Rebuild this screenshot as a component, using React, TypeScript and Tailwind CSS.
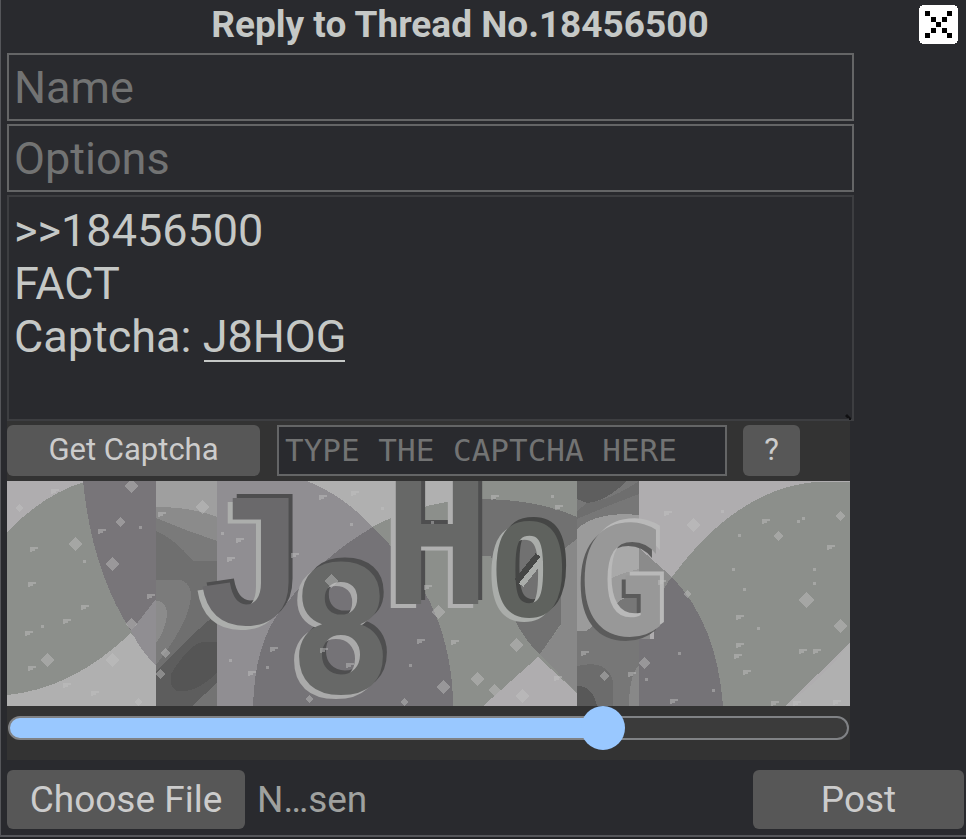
import { useState } from "react";

type Shape = [color: string, d: string];

const backdrop: Shape[] = [
  ["#8c8f8b", "M0 0H149V225H0Z"],
  ["#afadaf", "M0 0H80Q38 12 0 51Z"],
  ["#787579", "M76 0H149V118L124 150Q85 90 76 0Z"],
  ["#b0b0b0", "M0 214Q65 208 124 152L149 184V225H0Z"],
  ["#908e92", "M124 150L149 118V184Q135 172 124 150Z"],
  ["#9f9f9f", "M149 0H210V225H149Z"],
  ["#8b8b8b", "M149 26Q185 26 210 36V225H149Z"],
  ["#7a7a7a", "M149 37Q180 50 210 60V225H149Z"],
  ["#6f6f6f", "M149 50Q168 58 186 80H210V225H149Z"],
  ["#7b7b7b", "M149 99H174Q187 104 183 122Q179 145 149 184Z"],
  ["#8b8b8b", "M149 120Q160 120 160 134Q158 150 149 162Z"],
  ["#5d5d5d", "M149 190L192 148L210 132V225H149Z"],
  ["#555555", "M164 193Q182 163 196 161H210V192Q188 213 170 210Q162 206 164 193Z"],
  ["#737373", "M185 225L210 202V225Z"],
  ["#908e92", "M210 0H390V225H210Z"],
  ["#b0b0b0", "M300 0H470V70H385Q350 20 300 0Z"],
  ["#8c8f8b", "M365 46Q410 22 470 18V0H570V225H246Z"],
  ["#757377", "M246 225Q248 155 280 122Q315 75 366 46Q410 90 427 130Q446 175 446 225Z"],
  ["#717171", "M470 18Q530 18 570 36V120L533 173Q505 150 484 75H470Z"],
  ["#8c8f8b", "M375 41Q420 20 470 18V140L423 120Q400 70 375 41Z"],
  ["#888888", "M533 173L554 144L554 70L570 58V212Z"],
  ["#afadaf", "M531 176L476 225H570V212Z"],
  ["#777777", "M570 0H632V225H570Z"],
  ["#5e5e5e", "M570 0H620Q598 21 580 22L570 18Z"],
  ["#6e6e6e", "M570 30L580 22Q604 19 632 0V13Q600 25 570 38Z"],
  ["#9b9b9b", "M570 48Q590 30 632 34V150H570Z"],
  ["#a9a9a9", "M588 90Q600 58 632 48V88Q598 96 588 110Z"],
  ["#777777", "M594 138Q612 115 632 112V158H570Z"],
  ["#6c6c6c", "M570 185Q600 178 606 200V225H570Z"],
  ["#585858", "M570 205Q585 204 590 225H570Z"],
  ["#888888", "M622 225Q622 195 632 184V225Z"],
  ["#afadaf", "M632 0H843V225H632Z"],
  ["#8b8b8b", "M632 67L665 96Q650 120 642 160H632Z"],
  ["#757377", "M665 96Q649 113 647 158H632V225H716Q710 143 665 96Z"],
  ["#8c8f8b", "M665 96Q730 8 808 1H843V162L778 225H716Q710 143 665 96Z"],
  ["#b0b0b0", "M778 225Q816 198 843 162V225Z"],
];

// x, y and half-size of each speck
const specks: [number, number, number][] = [
  [12, 27, 4], [68, 63, 7], [124, 5, 7], [113, 41, 5], [105, 83, 7], [40, 179, 7],
  [124, 143, 6], [105, 179, 7], [153, 193, 5], [195, 26, 7], [131, 221, 4], [158, 172, 5],
  [324, 100, 7], [431, 131, 7], [509, 164, 7], [470, 198, 7], [436, 206, 7], [487, 209, 6],
  [515, 215, 7], [397, 221, 4], [302, 218, 4], [686, 44, 7], [771, 55, 5], [833, 35, 5],
  [799, 119, 8], [833, 145, 7], [637, 182, 6], [597, 195, 5], [680, 113, 4],
];

const flecks: [number, number][] = [
  [48, 10], [27, 68], [25, 103], [78, 126], [60, 140], [22, 152], [25, 187], [60, 204],
  [88, 212], [95, 50], [144, 115], [155, 33], [233, 59], [224, 78], [288, 74], [316, 16],
  [348, 12], [267, 168], [245, 192], [317, 169], [343, 184], [488, 16], [552, 26],
  [421, 106], [414, 160], [448, 161], [578, 172], [551, 197], [661, 32], [759, 40],
  [824, 66], [733, 136], [733, 164], [731, 175], [740, 191], [796, 170], [810, 170],
  [655, 101], [667, 220], [625, 193], [768, 222], [790, 222], [830, 221],
];

const dots: [number, number][] = [
  [133, 46], [77, 80], [35, 145], [215, 52], [223, 179], [260, 186], [344, 43], [375, 27],
  [545, 15], [425, 41], [403, 184], [715, 30], [732, 54], [791, 40], [796, 37], [726, 88],
  [807, 88], [807, 102], [737, 108], [751, 147], [672, 172], [639, 198], [706, 209],
];

const letters = [
  { char: "J", x: 186, y: 143, style: "font-['Liberation_Mono',monospace] text-[192px] fill-[#6a696b] [text-shadow:-5px_4px_0_#acaeac,4px_-4px_0_#4e4e4f]" },
  { char: "8", x: 281, y: 212, style: "font-['DejaVu_Sans_Mono',monospace] text-[176px] fill-[#676867] [text-shadow:-5px_4px_0_#aaaaaa,4px_-4px_0_#4e4e4f]" },
  { char: "H", x: 377, y: 123, style: "font-['DejaVu_Sans_Mono',monospace] text-[176px] fill-[#676867] [text-shadow:-5px_4px_0_#b0b0b0,4px_-4px_0_#4e4e4f]" },
  { char: "0", x: 484, y: 136, style: "font-['Liberation_Sans',sans-serif] text-[138px] fill-[#5f625e] [text-shadow:-5px_4px_0_#aaadaa,4px_-4px_0_#454645]" },
  { char: "G", x: 569, y: 154, style: "font-['DejaVu_Sans_Mono',monospace] text-[152px] fill-[#989898] [text-shadow:4px_-4px_0_#b9b9b9,-4px_4px_0_#5b5b5b]" },
];

function CaptchaPicture() {
  return (
    <svg viewBox="0 0 843 225" className="block w-full" role="img" aria-label="Captcha challenge">
      <g shapeRendering="crispEdges">
        {backdrop.map(([color, d]) => (
          <path key={d} fill={color} d={d} />
        ))}
      </g>
      {letters.map((l) => (
        <text key={l.char} x={l.x} y={l.y} className={`${l.style} font-bold`}>
          {l.char}
        </text>
      ))}
      <g strokeWidth="6" shapeRendering="crispEdges">
        <path d="M514 104L534 79" stroke="#aaadaa" />
        <path d="M510 100L531 74" stroke="#454645" />
      </g>
      <g fill="#c4c4c4" fillOpacity="0.45" shapeRendering="crispEdges">
        {specks.map(([x, y, r]) => (
          <path key={`${x}-${y}`} d={`M${x} ${y - r}L${x + r} ${y}L${x} ${y + r}L${x - r} ${y}Z`} />
        ))}
        {flecks.map(([x, y]) => (
          <path key={`${x}-${y}`} d={`M${x - 4} ${y - 2}h8v2h-3v2h-3v1h-2Z`} />
        ))}
        {dots.map(([x, y]) => (
          <rect key={`${x}-${y}`} x={x - 1} y={y - 1} width="3" height="3" />
        ))}
      </g>
    </svg>
  );
}

const closePixels = [[6, 6], [12, 12], [17, 17], [23, 23], [28, 28], [28, 6], [23, 12], [12, 23], [6, 28]];

function CloseIcon() {
  return (
    <svg viewBox="0 0 39 39" className="block size-[39px]" shapeRendering="crispEdges" aria-hidden="true">
      <path fill="#ffffff" d="M3 0H36V1H38V3H39V36H38V38H36V39H3V38H1V36H0V3H1V1H3Z" />
      {closePixels.map(([x, y]) => (
        <rect key={`${x}-${y}`} x={x} y={y} width="5" height="5" fill="#000000" />
      ))}
    </svg>
  );
}

const field =
  "block w-full border-2 border-[#646566] bg-transparent px-[5px] text-[45px] text-[#c5c8c6] outline-none placeholder:text-[#727373]";
const button = "rounded-md bg-[#575757] text-[#cccccc]";

export default function App() {
  const [shift, setShift] = useState(72);
  const [comment, setComment] = useState(">>18456500\nFACT\nCaptcha: J8HOG");

  return (
    <main className="min-h-[839px] bg-[#222326] font-['Roboto',sans-serif] text-[#c5c8c6]">
      <form
        className="border-b-2 border-l border-[#55565a] bg-[#292a2e] pb-1.5 pl-1.5"
        onSubmit={(e) => e.preventDefault()}
      >
        <header className="flex h-[53px] items-start pt-[5px] pr-2">
          <h1 className="flex-1 pr-1.5 text-center text-[37px] leading-10 font-bold">
            Reply to Thread No.18456500
          </h1>
          <button type="button" aria-label="Close">
            <CloseIcon />
          </button>
        </header>

        <div className="mr-[112px] flex flex-col gap-[3px]">
          <input className={`${field} h-[68px]`} aria-label="Name" placeholder="Name" />
          <input className={`${field} h-[68px]`} aria-label="Options" placeholder="Options" />
          <div className="relative">
            <textarea
              className="block h-[226px] w-full resize-none border-2 border-[#3d3e41] bg-transparent px-[5px] py-[7px] text-[45px] leading-[53px] text-[#c5c8c6] outline-none"
              aria-label="Comment"
              value={comment}
              onChange={(e) => setComment(e.target.value)}
            />
            <span className="absolute top-[165px] left-[197px] h-0.5 w-[141px] bg-[#c5c8c6]" />
            <svg viewBox="0 0 8 8" className="absolute right-0.5 bottom-0 size-2" aria-hidden="true">
              <path d="M1 3l2-2 2 2 2 2v2H5V5H3z" fill="#101012" />
            </svg>
          </div>
        </div>

        <section className="mr-[116px] bg-[#333333] pt-1" aria-label="Captcha">
          <div className="flex h-[51px] items-stretch">
            <button type="button" className={`${button} w-[253px] text-[31px]`}>
              Get Captcha
            </button>
            <input
              className="ml-[17px] min-w-0 flex-1 border-2 border-[#646566] bg-[#292a2e] px-1.5 font-['DejaVu_Sans_Mono',monospace] text-[31px] outline-none placeholder:text-[#727373]"
              aria-label="Captcha answer"
              placeholder="TYPE THE CAPTCHA HERE"
            />
            <button type="button" className={`${button} mr-[50px] ml-4 w-[57px] text-[31px]`}>
              ?
            </button>
          </div>
          <div className="pt-[5px]">
            <CaptchaPicture />
          </div>
          <div className="h-[54px]">
            <input
              type="range"
              min={0}
              max={100}
              value={shift}
              onChange={(e) => setShift(Number(e.target.value))}
              aria-label="Captcha alignment"
              className="block h-11 w-full appearance-none rounded-full bg-transparent px-px outline-none [&::-webkit-slider-runnable-track]:h-6 [&::-webkit-slider-runnable-track]:rounded-full [&::-webkit-slider-runnable-track]:border-2 [&::-webkit-slider-runnable-track]:border-[#808285] [&::-webkit-slider-runnable-track]:[background:var(--track)] [&::-webkit-slider-thumb]:-mt-3 [&::-webkit-slider-thumb]:size-11 [&::-webkit-slider-thumb]:appearance-none [&::-webkit-slider-thumb]:rounded-full [&::-webkit-slider-thumb]:bg-[#99c8ff]"
              style={{ "--track": `linear-gradient(to right, #99c8ff ${shift}%, #3b3b3b ${shift}%)` } as React.CSSProperties}
            />
          </div>
        </section>

        <div className="mt-2.5 mr-0.5 flex h-[59px] justify-between text-[37px]">
          <label className="flex items-center gap-3">
            <span className={`${button} flex h-full w-[238px] items-center justify-center`}>
              Choose File
            </span>
            <span className="text-[#9fa19f]">N…sen</span>
            <input type="file" className="sr-only" />
          </label>
          <button type="submit" className={`${button} w-[211px]`}>
            Post
          </button>
        </div>
      </form>
    </main>
  );
}
